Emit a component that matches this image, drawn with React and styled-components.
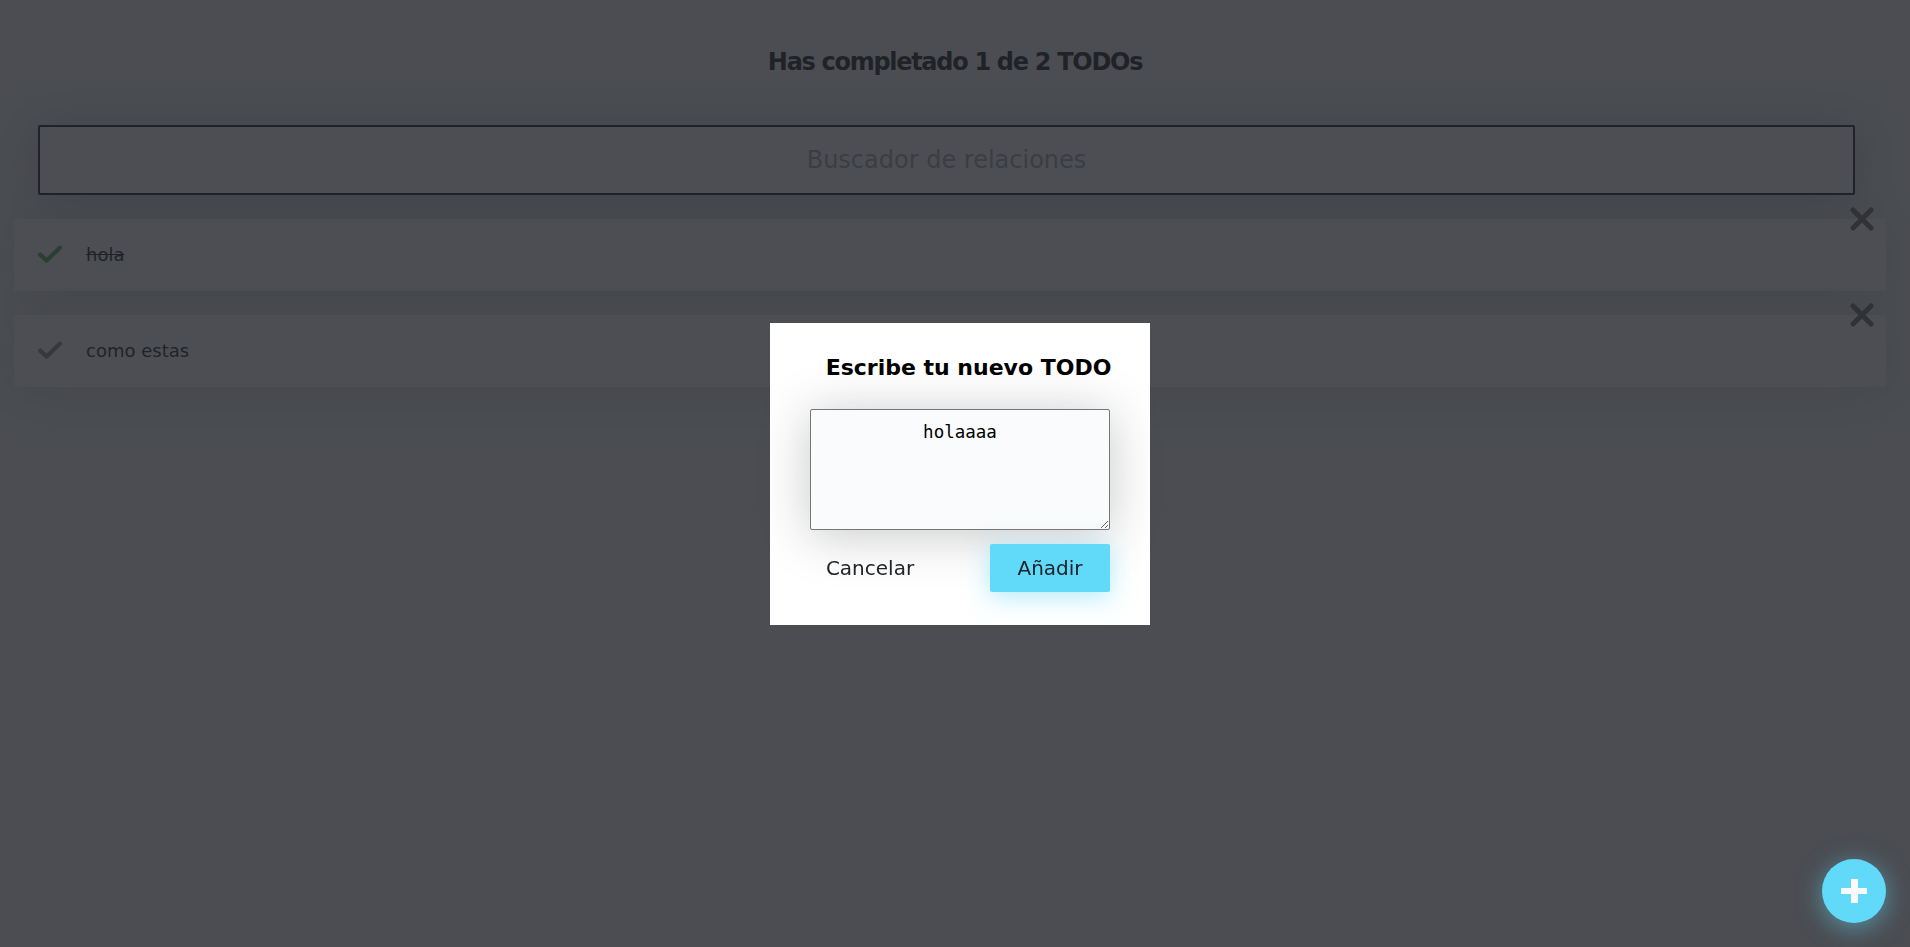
import React from 'react';
import styled, { createGlobalStyle } from 'styled-components';

const GlobalStyle = createGlobalStyle`
    * { box-sizing: border-box; }
    body {
        margin: 0;
        background: #F2F4F5;
        color: #1E1E1F;
        font-family: "DejaVu Sans", "Noto Sans", sans-serif;
    }
`;

const Page = styled.main`
    min-height: 100vh;
    display: flex;
    flex-direction: column;
`;

const Counter = styled.h2`
    margin: 0;
    padding: 48px;
    font-size: 24px;
    line-height: 29px;
    letter-spacing: -1.3px;
    text-align: center;
    font-weight: bold;
`;

const Search = styled.input`
    margin: 0 0 0 38px;
    width: 1817px;
    height: 70px;
    padding: 1px 2px;
    background: #F9FBFC;
    border: 2px solid #202329;
    border-radius: 2px;
    font-family: inherit;
    font-size: 24px;
    text-align: center;
    color: #1E1E1F;
    box-shadow: 0px 5px 50px rgba(32, 35, 41, 0.25);

    &::placeholder {
        color: #A5A5A5;
    }
`;

const List = styled.ul`
    margin: 0;
    padding: 0 0 56px 0;
    list-style: none;
`;

const Item = styled.li`
    position: relative;
    display: flex;
    justify-content: center;
    align-items: center;
    margin: 24px 24px 0 14px;
    background-color: #FAFAFA;
    box-shadow: 0px 5px 50px rgba(32, 35, 41, 0.15);
`;

const ItemText = styled.p`
    margin: 24px 0 24px 24px;
    width: calc(100% - 120px);
    font-size: 18px;
    line-height: 24px;
    text-decoration: ${p => (p.$done ? 'line-through' : 'none')};
`;

const IconBox = styled.span`
    position: absolute;
    display: flex;
    align-items: center;
    justify-content: center;
    width: 48px;
    height: 48px;
    cursor: pointer;
`;

const CheckBox = styled(IconBox)`
    left: 12px;
    color: ${p => (p.$done ? '#4caf50' : '#8a8a8a')};
`;

const DeleteBox = styled(IconBox)`
    top: -24px;
    right: 0;
    color: #6e6e6e;
`;

const CheckIcon = () => (
    <svg width="24" height="24" viewBox="0 0 24 24" fill="none">
        <path d="M2.2 11.6 L8.6 17.6 L21.8 4.8" stroke="currentColor" strokeWidth="4.2" strokeLinecap="round" strokeLinejoin="round" />
    </svg>
);

const DeleteIcon = () => (
    <svg width="24" height="24" viewBox="0 0 24 24" fill="none">
        <path d="M3 3 L21 21 M21 3 L3 21" stroke="currentColor" strokeWidth="5" strokeLinecap="round" />
    </svg>
);

const AddButton = styled.button`
    position: fixed;
    right: 24px;
    bottom: 24px;
    z-index: 2;
    width: 64px;
    height: 64px;
    padding: 0;
    border: none;
    border-radius: 50%;
    background-color: #61DAFA;
    box-shadow: 0px 5px 25px rgba(97, 218, 250, 0.5);
    cursor: pointer;
    display: flex;
    align-items: center;
    justify-content: center;
`;

const Plus = styled.span`
    position: relative;
    width: 26px;
    height: 24px;

    &::before, &::after {
        content: '';
        position: absolute;
        background: #FAFAFA;
    }
    &::before {
        left: 0;
        right: 0;
        top: 9px;
        height: 6px;
    }
    &::after {
        top: 0;
        bottom: 0;
        left: 9.5px;
        width: 7px;
    }
`;

const ModalBackground = styled.div`
    position: fixed;
    inset: 0;
    z-index: 1;
    padding-left: 10px;
    background: rgba(32, 35, 41, 0.8);
    display: flex;
    justify-content: center;
    align-items: center;
`;

const Form = styled.form`
    width: 380px;
    padding: 33px 40px;
    background-color: #fff;
    display: flex;
    flex-direction: column;
    align-items: center;
`;

const Label = styled.label`
    margin: 0 0 29px 17px;
    font-size: 22px;
    line-height: 24px;
    font-weight: bold;
    color: #000;
    text-align: center;
    white-space: nowrap;
`;

const TextArea = styled.textarea`
    width: 300px;
    height: 121px;
    padding: 12px;
    background-color: #F9FBFC;
    border: 1px solid #767676;
    border-radius: 2px;
    box-shadow: 0px 5px 50px rgba(32, 35, 41, 0.25);
    font-family: "DejaVu Sans Mono", "Liberation Mono", monospace;
    font-size: 17.5px;
    text-align: center;
    color: #000;
`;

const ButtonRow = styled.div`
    width: 100%;
    margin-top: 14px;
    display: flex;
    justify-content: space-between;
    align-items: center;
`;

const FormButton = styled.button`
    width: 120px;
    height: 48px;
    border: none;
    border-radius: 2px;
    font-family: inherit;
    font-size: 20px;
    color: #202329;
    cursor: pointer;
    background: ${p => (p.$primary ? '#61DAFA' : 'transparent')};
    box-shadow: ${p => (p.$primary ? '0px 5px 25px rgba(97, 218, 250, 0.5)' : 'none')};
`;

const todos = [
    { text: 'hola', completed: true },
    { text: 'como estas', completed: false },
];

function TodoItem({ text, completed }) {
    return (
        <Item>
            <CheckBox $done={completed}><CheckIcon /></CheckBox>
            <ItemText $done={completed}>{text}</ItemText>
            <DeleteBox><DeleteIcon /></DeleteBox>
        </Item>
    );
}

export default function App() {
    const done = todos.filter(t => t.completed).length;
    return (
        <>
            <GlobalStyle />
            <Page>
                <Counter>Has completado {done} de {todos.length} TODOs</Counter>
                <Search placeholder="Buscador de relaciones" />
                <List>
                    {todos.map(t => <TodoItem key={t.text} {...t} />)}
                </List>
                <AddButton><Plus /></AddButton>
                <ModalBackground>
                    <Form onSubmit={e => e.preventDefault()}>
                        <Label>Escribe tu nuevo TODO</Label>
                        <TextArea defaultValue="holaaaa" />
                        <ButtonRow>
                            <FormButton type="button">Cancelar</FormButton>
                            <FormButton type="submit" $primary>Añadir</FormButton>
                        </ButtonRow>
                    </Form>
                </ModalBackground>
            </Page>
        </>
    );
}
